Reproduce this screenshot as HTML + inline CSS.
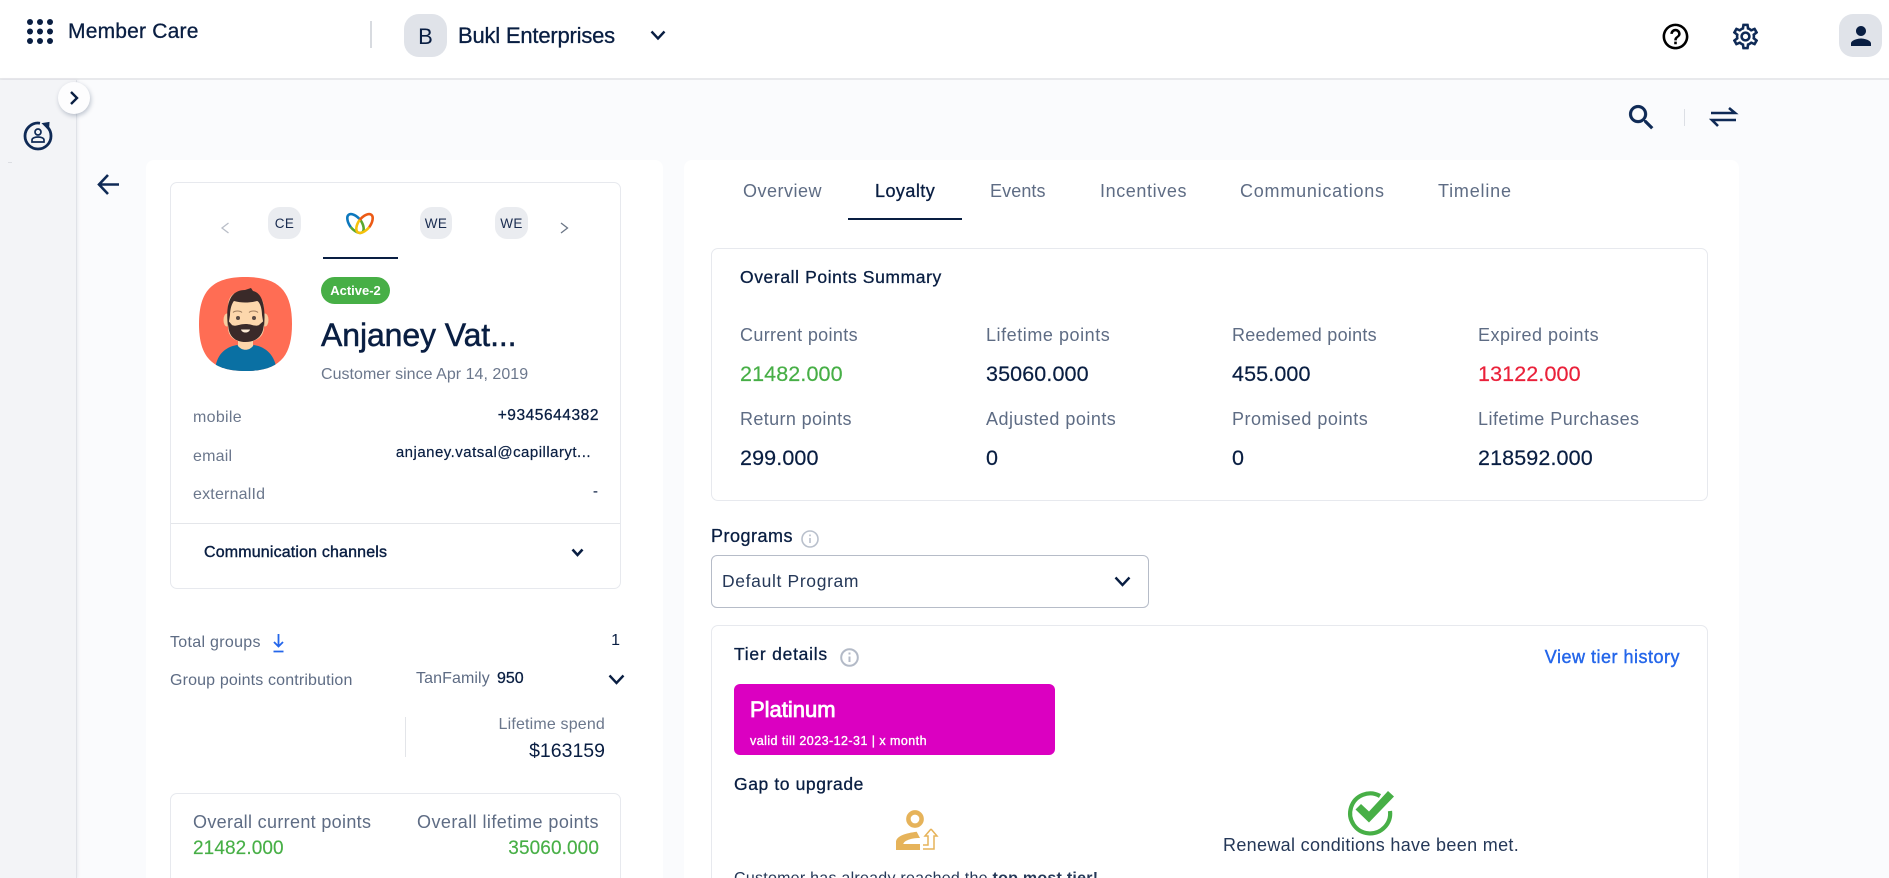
<!DOCTYPE html>
<html lang="en"><head><meta charset="utf-8"><title>Member Care</title>
<style>
html,body{margin:0;padding:0;width:1889px;height:878px;overflow:hidden;background:#fafbfd;font-family:"Liberation Sans",Arial,sans-serif;color:#091e42}
#p{position:relative;width:1889px;height:878px;overflow:hidden;background:#fafbfd}
.t{position:absolute;white-space:nowrap;line-height:20px;height:20px}
.r{text-align:right}
.a{position:absolute}
.g{color:#5e6c84}
.n{color:#091e42}
.m{-webkit-text-stroke:.3px currentColor}
.card{position:absolute;background:#fff;border:1px solid #e7e9ee;border-radius:7px;box-sizing:border-box}
.sq{position:absolute;background:#eaecf0;border-radius:12px;text-align:center;font-size:13.5px;color:#1a2c50;letter-spacing:.4px}
svg{position:absolute;overflow:visible}
.lab{font-size:18px;color:#5e6c84}
.val{font-size:21.5px;color:#091e42;letter-spacing:.12px;-webkit-text-stroke:.2px currentColor}
</style></head><body><div id="p">
<!-- header -->
<div class="a" style="left:0;top:0;width:1889px;height:78px;background:#fff;border-bottom:2px solid #e8e9ec"></div>
<svg style="left:27px;top:19px" width="26" height="25" fill="#091e42"><circle cx="3" cy="3" r="3"/><circle cx="13" cy="3" r="3"/><circle cx="23" cy="3" r="3"/><circle cx="3" cy="12.5" r="3"/><circle cx="13" cy="12.5" r="3"/><circle cx="23" cy="12.5" r="3"/><circle cx="3" cy="22" r="3"/><circle cx="13" cy="22" r="3"/><circle cx="23" cy="22" r="3"/></svg>
<div class="t m" style="left:68px;top:22px;font-size:21px;letter-spacing:.2px">Member Care</div>
<div class="a" style="left:370px;top:21px;width:1.5px;height:27px;background:#d8dbe0"></div>
<div class="a" style="left:404px;top:14px;width:43px;height:43px;background:#e0e3e9;border-radius:15px;text-align:center;line-height:45px;font-size:22px">B</div>
<div class="t m" style="left:458px;top:26px;font-size:22px;letter-spacing:-.2px">Bukl Enterprises</div>
<svg style="left:650px;top:30px" width="16" height="11" fill="none" stroke="#091e42" stroke-width="2.4"><path d="M1.5 1.5L8 8.5L14.5 1.5"/></svg>
<svg style="left:1659.5px;top:20.5px" width="31" height="31" viewBox="0 0 24 24" fill="#000"><path d="M11 18h2v-2h-2v2zm1-16C6.48 2 2 6.48 2 12s4.48 10 10 10 10-4.48 10-10S17.52 2 12 2zm0 18c-4.41 0-8-3.59-8-8s3.59-8 8-8 8 3.59 8 8-3.59 8-8 8zm0-14c-2.21 0-4 1.79-4 4h2c0-1.1.9-2 2-2s2 .9 2 2c0 2-3 1.75-3 5h2c0-2.25 3-2.5 3-5 0-2.21-1.79-4-4-4z"/></svg>
<svg style="left:1729.5px;top:20.5px" width="31" height="31" viewBox="0 0 24 24" fill="#0f2a56"><path d="M19.43 12.98c.04-.32.07-.64.07-.98 0-.34-.03-.66-.07-.98l2.11-1.65c.19-.15.24-.42.12-.64l-2-3.46c-.09-.16-.26-.25-.44-.25-.06 0-.12.01-.17.03l-2.49 1c-.52-.4-1.08-.73-1.69-.98l-.38-2.65C14.46 2.18 14.25 2 14 2h-4c-.25 0-.46.18-.49.42l-.38 2.65c-.61.25-1.17.59-1.69.98l-2.49-1c-.06-.02-.12-.03-.18-.03-.17 0-.34.09-.43.25l-2 3.46c-.13.22-.07.49.12.64l2.11 1.65c-.04.32-.07.65-.07.98 0 .33.03.66.07.98l-2.11 1.65c-.19.15-.24.42-.12.64l2 3.46c.09.16.26.25.44.25.06 0 .12-.01.17-.03l2.49-1c.52.4 1.08.73 1.69.98l.38 2.65c.03.24.24.42.49.42h4c.25 0 .46-.18.49-.42l.38-2.65c.61-.25 1.17-.59 1.69-.98l2.49 1c.06.02.12.03.18.03.17 0 .34-.09.43-.25l2-3.46c.12-.22.07-.49-.12-.64l-2.11-1.65zm-1.98-1.71c.04.31.05.52.05.73 0 .21-.02.43-.05.73l-.14 1.13.89.7 1.08.84-.7 1.21-1.27-.51-1.04-.42-.9.68c-.43.32-.84.56-1.25.73l-1.06.43-.16 1.13-.2 1.35h-1.4l-.19-1.35-.16-1.13-1.06-.43c-.43-.18-.83-.41-1.23-.71l-.91-.7-1.06.43-1.27.51-.7-1.21 1.08-.84.89-.7-.14-1.13c-.03-.31-.05-.54-.05-.74s.02-.43.05-.73l.14-1.13-.89-.7-1.08-.84.7-1.21 1.27.51 1.04.42.9-.68c.43-.32.84-.56 1.25-.73l1.06-.43.16-1.13.2-1.35h1.39l.19 1.35.16 1.13 1.06.43c.43.18.83.41 1.23.71l.91.7 1.06-.43 1.27-.51.7 1.21-1.07.85-.89.7.14 1.13zM12 8c-2.21 0-4 1.79-4 4s1.79 4 4 4 4-1.79 4-4-1.79-4-4-4zm0 6c-1.1 0-2-.9-2-2s.9-2 2-2 2 .9 2 2-.9 2-2 2z"/></svg>
<div class="a" style="left:1839px;top:14px;width:43px;height:43px;background:#e0e3e9;border-radius:14px"></div>
<svg style="left:1846px;top:21px" width="30" height="30" viewBox="0 0 24 24" fill="#091e42"><path d="M12 12c2.21 0 4-1.79 4-4s-1.79-4-4-4-4 1.79-4 4 1.79 4 4 4zm0 2c-2.67 0-8 1.34-8 4v2h16v-2c0-2.66-5.33-4-8-4z"/></svg>
<!-- sidebar -->
<div class="a" style="left:0;top:80px;width:76px;height:798px;background:#f3f4f7;border-right:1px solid #e0e2e8;box-shadow:1px 0 3px rgba(9,30,66,.07)"></div>
<div class="a" style="left:8px;top:162px;width:4px;height:1px;background:#dcdee3"></div>
<div class="a" style="left:58px;top:82px;width:32px;height:32px;border-radius:50%;background:#fdfdfe;box-shadow:1px 2px 5px rgba(9,30,66,.25)"></div>
<svg style="left:68px;top:90px" width="12" height="16" fill="none" stroke="#091e42" stroke-width="2.4"><path d="M3 2L9 8L3 14"/></svg>
<svg style="left:22px;top:120px" width="32" height="32" fill="none" stroke="#0f2a56" stroke-width="2.8"><path d="M18 3.200A13 13 0 0 0 3 16a13 13 0 0 0 26 0a13 13 0 0 0-4-9.400"/><path d="M20.500 3.500L27 2.500L26.500 9.500Z" fill="#0f2a56" stroke-width="1"/><circle cx="16" cy="12" r="3" stroke-width="1.700"/><path d="M10 22v-2c0-2 3-3 6-3s6 1 6 3v2Z" stroke-width="1.700"/></svg>
<svg style="left:97px;top:173px" width="23" height="23" fill="none" stroke="#0f2a56" stroke-width="2.6"><path d="M22 11.500H3M11 2L2 11.500L11 21"/></svg>
<!-- top tools -->
<svg style="left:1625px;top:101px" width="33" height="33" viewBox="0 0 24 24" fill="#0f2a56" stroke="#0f2a56" stroke-width=".3"><path d="M15.500 14h-.79l-.28-.27C15.410 12.590 16 11.110 16 9.500 16 5.910 13.090 3 9.500 3S3 5.910 3 9.500 5.910 16 9.500 16c1.610 0 3.090-.59 4.230-1.570l.27.28v.79l5 4.990L20.490 19l-4.990-5zm-6 0C7.010 14 5 11.990 5 9.500S7.010 5 9.500 5 14 7.010 14 9.500 11.990 14 9.500 14z"/></svg>
<div class="a" style="left:1684px;top:109px;width:1px;height:17px;background:#dcdfe5"></div>
<svg style="left:1710px;top:107px" width="27" height="20" fill="none" stroke="#0f2a56" stroke-width="2.600"><path d="M1 6H25L19 1M26 13H2L8 19"/></svg>
<!-- left panel -->
<div class="a" style="left:146px;top:160px;width:517px;height:718px;background:#fff;border-radius:8px 8px 0 0"></div>
<div class="card" style="left:170px;top:182px;width:451px;height:407px"></div>
<svg style="left:221px;top:222px" width="9" height="12" fill="none" stroke="#b9bec8" stroke-width="1.3"><path d="M7.500 1L1 6L7.500 11"/></svg>
<div class="sq" style="left:268px;top:207px;width:33px;height:32px;line-height:33px">CE</div>
<svg style="left:345px;top:212px" width="30" height="23" fill="none" stroke-width="2.600"><path d="M15.200 7.800A12 6 52 0 0 5.800 15.200" stroke="#0d78bd"/><path d="M5.800 15.200A12 6 52 0 0 15.200 7.800" stroke="#5aa72f"/><path d="M24.200 15.200A12 6 -52 0 1 14.800 7.800" stroke="#f6c10b"/><path d="M14.800 7.800A12 6 -52 0 1 24.200 15.200" stroke="#ec5a15"/></svg>
<div class="a" style="left:323px;top:257px;width:75px;height:2px;background:#091e42"></div>
<div class="sq" style="left:420px;top:207px;width:32px;height:32px;line-height:33px">WE</div>
<div class="sq" style="left:495px;top:207px;width:33px;height:32px;line-height:33px">WE</div>
<svg style="left:560px;top:222px" width="9" height="12" fill="none" stroke="#6b7686" stroke-width="1.300"><path d="M1 1L7.500 6L1 11"/></svg>
<svg style="left:199px;top:277px" width="93" height="94" viewBox="0 0 93 94">
<defs><clipPath id="sq"><path d="M46.500 0C80 0 93 14 93 47C93 80 80 94 46.500 94C13 94 0 80 0 47C0 14 13 0 46.500 0Z"/></clipPath></defs>
<path d="M46.500 0C80 0 93 14 93 47C93 80 80 94 46.500 94C13 94 0 80 0 47C0 14 13 0 46.500 0Z" fill="#ff6d54"/>
<g clip-path="url(#sq)">
<path d="M16 94C17 78 26 70 38 68C43 71 50 71 55 68C67 70 76 78 78 94Z" fill="#0a70a3"/>
<path d="M39 58H54V69C50 74 43 74 39 69Z" fill="#fcd5a9"/>
<ellipse cx="28" cy="43" rx="3.500" ry="6.500" fill="#f8cda0"/><ellipse cx="66" cy="43" rx="3.500" ry="6.500" fill="#f8cda0"/>
<path d="M29 30C29 18 36 14 46 14C58 14 65 20 65 32V50C65 60 57 65 46.500 65C36 65 29 60 29 50Z" fill="#fdd7ac"/>
<path d="M29 50C26 25 32 13 46 13L52 11L54 14C63 16 67 28 65 50L63 38C63 30 60 24 58 24C50 26 42 26 35 24C33 26 31 32 31 38Z" fill="#3a2a29"/>
<path d="M29.500 44L33 48C37 50 40 47 46.500 47C53 47 56 50 60 48L64.500 44C66 58 58 65 46.500 65C35 65 28 58 29.500 44Z" fill="#3a2a29"/>
<path d="M42 52.500H51C50 56.500 43 56.500 42 52.500Z" fill="#fdebd4"/>
<circle cx="39" cy="41" r="2" fill="#5a4a44"/><circle cx="55" cy="41" r="2" fill="#5a4a44"/>
<path d="M34 35.500C36 33.500 41 33.500 43 35.500M50 35.500C52 33.500 57 33.500 59 35.500" stroke="#a07e60" stroke-width="1" fill="none"/>
</g></svg>
<div class="a" style="left:321px;top:277px;width:69px;height:27px;border-radius:14px;background:#47af46;color:#fff;font-weight:bold;font-size:13px;text-align:center;line-height:27px">Active-2</div>
<div class="t" style="left:321px;top:315px;font-size:32px;line-height:40px;height:40px;letter-spacing:-.1px;-webkit-text-stroke:.5px currentColor">Anjaney Vat...</div>
<div class="t" style="left:321px;top:365px;font-size:16px;color:#6b778c;letter-spacing:.03px">Customer since Apr 14, 2019</div>
<div class="t" style="left:193px;top:408px;font-size:16px;color:#6b778c;letter-spacing:.3px">mobile</div>
<div class="t r m" style="right:1290px;top:406px;font-size:15.500px;letter-spacing:.55px">+9345644382</div>
<div class="t" style="left:193px;top:447px;font-size:16px;color:#6b778c;letter-spacing:.2px">email</div>
<div class="t r" style="right:1298px;top:443px;font-size:15px;-webkit-text-stroke:.2px #091e42;letter-spacing:.48px">anjaney.vatsal@capillaryt...</div>
<div class="t" style="left:193px;top:485px;font-size:16px;color:#6b778c;letter-spacing:.2px">externalId</div>
<div class="t r" style="right:1291px;top:482px;font-size:15.500px">-</div>
<div class="a" style="left:171px;top:523px;width:449px;height:1px;background:#e4e6ea"></div>
<div class="t" style="left:204px;top:543px;font-size:16px;-webkit-text-stroke:.4px #091e42;letter-spacing:.16px">Communication channels</div>
<svg style="left:571px;top:548px" width="13" height="10" fill="none" stroke="#091e42" stroke-width="2.600"><path d="M1.500 1.500L6.500 7L11.500 1.500"/></svg>
<div class="t" style="left:170px;top:633px;font-size:16px;color:#5e6c84;letter-spacing:.3px">Total groups</div>
<svg style="left:272px;top:634px" width="13" height="19" fill="none" stroke="#2466ea" stroke-width="1.800"><path d="M6.500 0V12M2 8L6.500 12.500L11 8M1.500 17.500H11.500"/></svg>
<div class="t r" style="right:1269px;top:631px;font-size:16px">1</div>
<div class="t" style="left:170px;top:671px;font-size:16px;color:#5e6c84;letter-spacing:.15px">Group points contribution</div>
<div class="t" style="left:416px;top:669px;font-size:16px;color:#5e6c84;letter-spacing:.1px">TanFamily</div>
<div class="t m" style="left:497px;top:669px;font-size:16px">950</div>
<svg style="left:608px;top:674px" width="17" height="12" fill="none" stroke="#091e42" stroke-width="2.400"><path d="M1.500 1.500L8.500 9L15.500 1.500"/></svg>
<div class="a" style="left:405px;top:717px;width:1px;height:40px;background:#e3e5e9"></div>
<div class="t r" style="right:1284px;top:715px;font-size:16px;color:#6b778c;letter-spacing:.17px">Lifetime spend</div>
<div class="t r" style="right:1284px;top:741px;font-size:19.500px">$163159</div>
<div class="card" style="left:170px;top:793px;width:451px;height:100px"></div>
<div class="t" style="left:193px;top:812px;font-size:18px;color:#5e6c84;letter-spacing:.33px">Overall current points</div>
<div class="t" style="left:193px;top:839px;font-size:19px;color:#47af46;letter-spacing:.1px;-webkit-text-stroke:.15px currentColor">21482.000</div>
<div class="t r" style="right:1290px;top:812px;font-size:18px;color:#5e6c84;letter-spacing:.43px">Overall lifetime points</div>
<div class="t r" style="right:1290px;top:839px;font-size:19px;color:#47af46;letter-spacing:.1px;-webkit-text-stroke:.15px currentColor">35060.000</div>
<!-- right panel -->
<div class="a" style="left:684px;top:160px;width:1055px;height:718px;background:#fff;border-radius:8px 8px 0 0"></div>
<div class="t g" style="left:743px;top:181px;font-size:18px;letter-spacing:.5px">Overview</div>
<div class="t m" style="left:875px;top:181px;font-size:18px;letter-spacing:.45px">Loyalty</div>
<div class="t g" style="left:990px;top:181px;font-size:18px;letter-spacing:.1px">Events</div>
<div class="t g" style="left:1100px;top:181px;font-size:18px;letter-spacing:.6px">Incentives</div>
<div class="t g" style="left:1240px;top:181px;font-size:18px;letter-spacing:.77px">Communications</div>
<div class="t g" style="left:1438px;top:181px;font-size:18px;letter-spacing:.8px">Timeline</div>
<div class="a" style="left:848px;top:218px;width:114px;height:2px;background:#091e42"></div>
<div class="card" style="left:711px;top:248px;width:997px;height:253px"></div>
<div class="t m" style="left:740px;top:267px;font-size:17.500px;letter-spacing:.6px">Overall Points Summary</div>
<div class="t lab" style="left:740px;top:325px;letter-spacing:.35px">Current points</div>
<div class="t lab" style="left:986px;top:325px;letter-spacing:.55px">Lifetime points</div>
<div class="t lab" style="left:1232px;top:325px;letter-spacing:.25px">Reedemed points</div>
<div class="t lab" style="left:1478px;top:325px;letter-spacing:.5px">Expired points</div>
<div class="t val" style="left:740px;top:364px;color:#47af46">21482.000</div>
<div class="t val" style="left:986px;top:364px">35060.000</div>
<div class="t val" style="left:1232px;top:364px">455.000</div>
<div class="t val" style="left:1478px;top:364px;color:#ea213a">13122.000</div>
<div class="t lab" style="left:740px;top:409px;letter-spacing:.37px">Return points</div>
<div class="t lab" style="left:986px;top:409px;letter-spacing:.48px">Adjusted points</div>
<div class="t lab" style="left:1232px;top:409px;letter-spacing:.48px">Promised points</div>
<div class="t lab" style="left:1478px;top:409px;letter-spacing:.47px">Lifetime Purchases</div>
<div class="t val" style="left:740px;top:448px">299.000</div>
<div class="t val" style="left:986px;top:448px">0</div>
<div class="t val" style="left:1232px;top:448px">0</div>
<div class="t val" style="left:1478px;top:448px">218592.000</div>
<div class="t m" style="left:711px;top:526px;font-size:18px;letter-spacing:.5px">Programs</div>
<svg style="left:801px;top:530px" width="18" height="18" fill="none" stroke="#b9c0cc" stroke-width="1.600"><circle cx="9" cy="9" r="8"/><path d="M9 8V13M9 4.500V6.200"/></svg>
<div class="a" style="left:711px;top:555px;width:438px;height:53px;background:#fff;border:1.500px solid #b6bcc8;border-radius:6px;box-sizing:border-box"></div>
<div class="t" style="left:722px;top:571px;font-size:17.500px;color:#253858;letter-spacing:.65px">Default Program</div>
<svg style="left:1114px;top:576px" width="17" height="12" fill="none" stroke="#091e42" stroke-width="2.400"><path d="M1.500 1.500L8.500 9L15.500 1.500"/></svg>
<div class="card" style="left:711px;top:625px;width:997px;height:270px"></div>
<div class="t m" style="left:734px;top:644px;font-size:17.500px;letter-spacing:.75px">Tier details</div>
<svg style="left:840px;top:648px" width="19" height="19" fill="none" stroke="#b3bac7" stroke-width="2"><circle cx="9.500" cy="9.500" r="8.300"/><path d="M9.500 8.500V14M9.500 4.500V6.500"/></svg>
<div class="t r" style="right:209px;top:647px;font-size:18px;color:#2466ea;letter-spacing:.5px;-webkit-text-stroke:.4px currentColor">View tier history</div>
<div class="a" style="left:734px;top:684px;width:321px;height:71px;background:#db00c1;border-radius:6px"></div>
<div class="t" style="left:750px;top:700px;font-size:22px;color:#fff;-webkit-text-stroke:.8px currentColor">Platinum</div>
<div class="t" style="left:750px;top:731px;font-size:12.500px;color:#fff;letter-spacing:.45px;-webkit-text-stroke:.35px currentColor">valid till 2023-12-31 | x month</div>
<div class="t m" style="left:734px;top:774px;font-size:17.500px;letter-spacing:.6px">Gap to upgrade</div>
<svg style="left:896px;top:809px" width="43" height="42" fill="#e6b35a">
<circle cx="19" cy="10" r="6.600" fill="none" stroke="#e6b35a" stroke-width="4.500"/>
<path d="M0 41V33C0 27 10 24 20.700 22.700L24 29C14 29 8 32 7.300 35H24V41Z"/>
<path d="M35 20L41 27H38V40H27M35 20L29 27H32V36H27" fill="none" stroke="#e6b35a" stroke-width="1.500"/>
</svg>
<svg style="left:1346px;top:788px" width="50" height="46" fill="none"><path d="M34 8A20 20 0 1 0 44 23" stroke="#47af46" stroke-width="4.200"/><path d="M9.500 20L15 14.500L23 22L42 1.500L48 7L23 33Z" fill="#47af46" transform="translate(0 1.500)"/></svg>
<div class="t" style="left:1223px;top:835px;font-size:18px;color:#253858;letter-spacing:.33px">Renewal conditions have been met.</div>
<div class="t" style="left:734px;top:869px;font-size:16px;color:#253858;letter-spacing:.26px">Customer has already reached the <b>top most tier!</b></div>
</div></body></html>
